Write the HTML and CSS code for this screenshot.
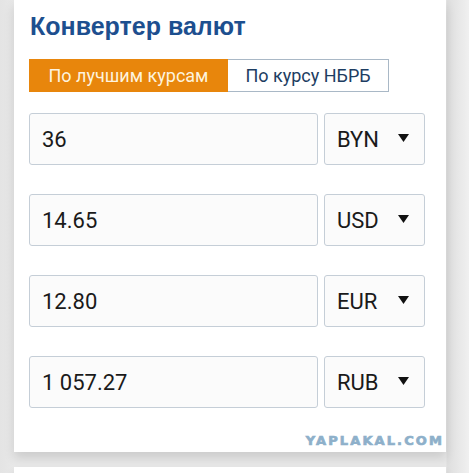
FILE: index.html
```html
<!DOCTYPE html>
<html lang="ru">
<head>
<meta charset="utf-8">
<link rel="stylesheet" href="styles.css">
</head>
<body>
<div class="page">
  <div class="card">
    <h2 class="title">Конвертер валют</h2>
    <div class="tabs">
      <div class="tab active">По лучшим курсам</div>
      <div class="tab">По курсу НБРБ</div>
    </div>
    <div class="rows">
      <div class="row">
        <div class="field">36</div>
        <div class="select"><span>BYN</span><svg class="arrow" width="11" height="8" viewBox="0 0 11 8"><path d="M0 0H11L5.5 8Z"/></svg></div>
      </div>
      <div class="row">
        <div class="field">14.65</div>
        <div class="select"><span>USD</span><svg class="arrow" width="11" height="8" viewBox="0 0 11 8"><path d="M0 0H11L5.5 8Z"/></svg></div>
      </div>
      <div class="row">
        <div class="field">12.80</div>
        <div class="select"><span>EUR</span><svg class="arrow" width="11" height="8" viewBox="0 0 11 8"><path d="M0 0H11L5.5 8Z"/></svg></div>
      </div>
      <div class="row">
        <div class="field">1 057.27</div>
        <div class="select"><span>RUB</span><svg class="arrow" width="11" height="8" viewBox="0 0 11 8"><path d="M0 0H11L5.5 8Z"/></svg></div>
      </div>
    </div>
    <div class="watermark">YAPLAKAL.COM</div>
  </div>
  <div class="card next"></div>
</div>
</body>
</html>
```
FILE: styles.css
```css
html, body {
  margin: 0;
  padding: 0;
}
body {
  background: linear-gradient(to right, #e4e4e4 0, #e8e8e8 14px, #e8e8e8 446px, #dedede 447px, #f0f0f0 469px);
  font-family: Roboto, "Noto Sans", sans-serif;
  height: 473px;
  overflow: hidden;
}
.page {
  width: 432px;
  margin-left: 14px;
}
.card {
  background: #fff;
  position: relative;
  padding: 11px 21px 44px 15px;
  box-shadow: 0 6px 10px rgba(0,0,0,0.12);
}
.title {
  margin: 0 0 0 1px;
  font-family: "Liberation Sans", Arial, sans-serif;
  font-weight: 700;
  font-size: 25px;
  line-height: 30px;
  color: #1d4f8f;
}
.tabs {
  display: flex;
  margin-top: 18px;
  height: 33px;
}
.tab {
  display: flex;
  align-items: center;
  justify-content: center;
  font-size: 18px;
  box-sizing: border-box;
}
.tab.active {
  width: 199px;
  background: #e8860c;
  color: #fdf3df;
}
.tab:not(.active) {
  width: 161px;
  border: 1px solid #a9b8c6;
  border-left: none;
  color: #1d3d62;
}
.rows {
  display: flex;
  flex-direction: column;
  gap: 29px;
  margin-top: 21px;
}
.row {
  display: flex;
  gap: 6px;
}
.field, .select {
  box-sizing: border-box;
  height: 52px;
  border: 1px solid #c5ced7;
  border-radius: 3px;
  background: #fbfbfb;
  font-size: 22px;
  color: #1a1a1a;
  display: flex;
  align-items: center;
}
.field {
  width: 289px;
  padding-left: 12px;
}
.select {
  width: 101px;
  padding-left: 12px;
  justify-content: space-between;
  padding-right: 15px;
}
.arrow {
  fill: #111;
  margin-top: -2px;
}
.watermark {
  position: absolute;
  right: 0;
  bottom: 0;
  background: #fff;
  padding: 6px 2px 5px 8px;
  font-family: "DejaVu Sans", sans-serif;
  font-weight: 700;
  font-size: 13px;
  line-height: 13px;
  letter-spacing: 2.1px;
  -webkit-text-stroke: 0.7px #8eb0ca;
  color: #8eb0ca;
}
.next {
  margin-top: 15px;
  height: 20px;
  padding: 0;
}
```
